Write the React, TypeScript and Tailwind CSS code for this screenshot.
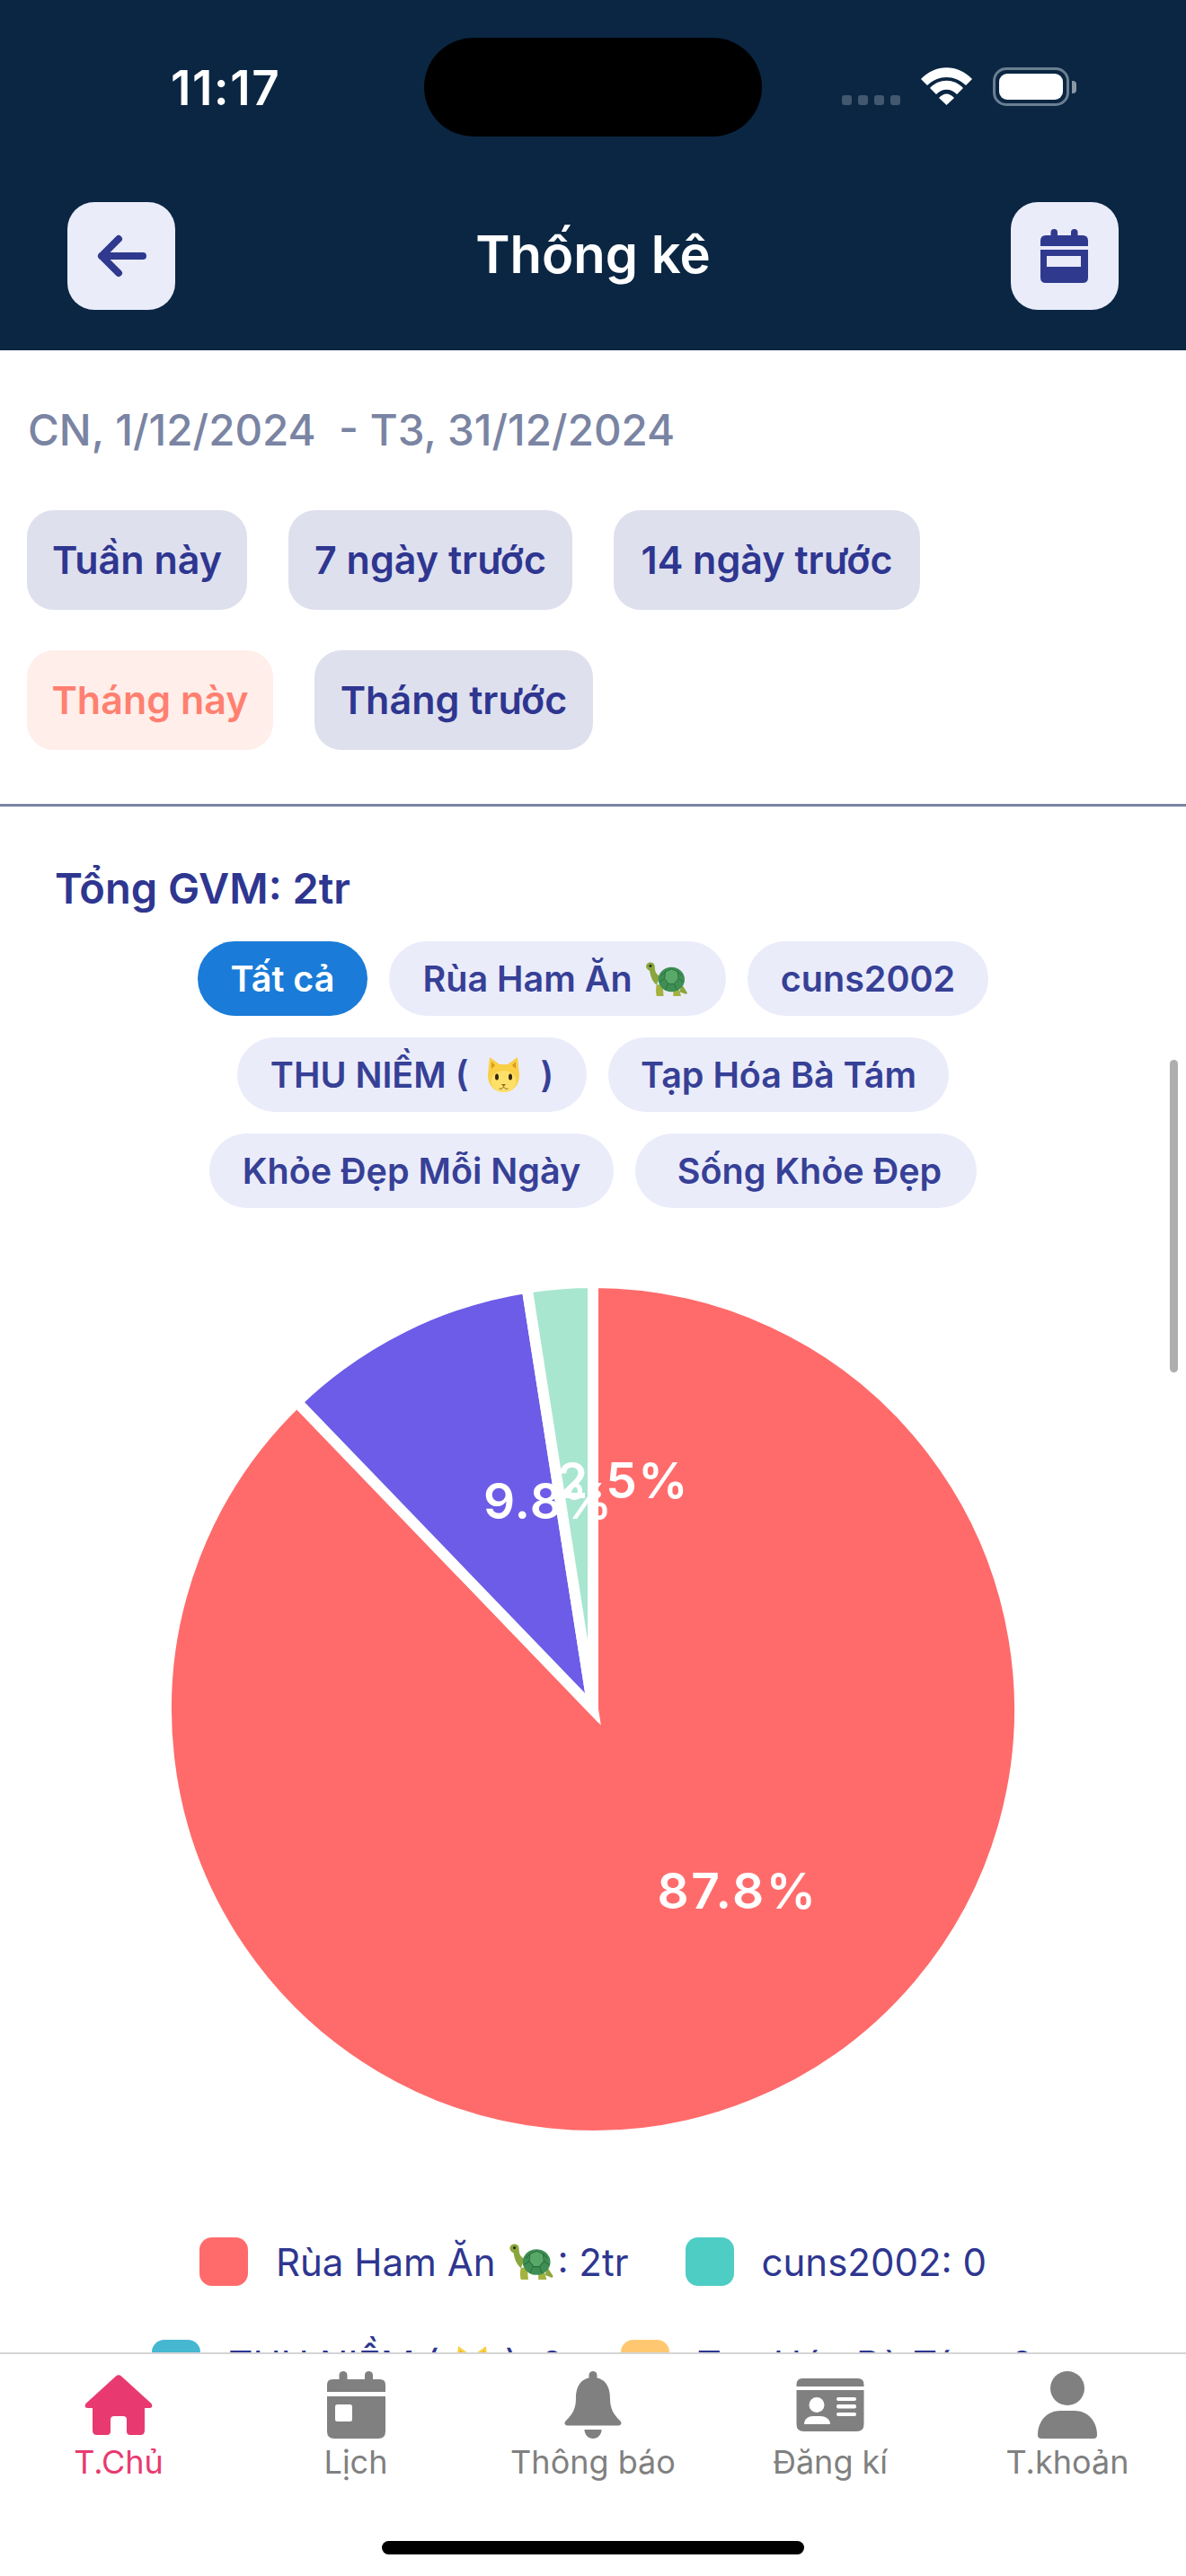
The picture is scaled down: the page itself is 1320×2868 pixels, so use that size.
import React from "react";

const Turtle = ({ w, h }: { w: number; h: number }) => (
  <svg width={w} height={h} viewBox="0 0 48 40" className="inline-block shrink-0">
    <path d="M1 5c0-3 3-5 6-4.500 3 .5 4 3 4 6 0 5 2 8 6 10l-4 10C7 21 6 15 5 10 3 9 1 7 1 5Z" fill="#8aa63c" />
    <path d="M13 26h7l1 13h-8c-1-4-1-9 0-13ZM32 29h6l3 10h-9Z" fill="#a4b23e" />
    <path d="M42 26l6 9-1 2-8-3Z" fill="#8aa63c" />
    <ellipse cx="30" cy="20" rx="15" ry="14" fill="#3f8f54" />
    <path d="M23 11l7-3 7 3 1 8-5 6h-6l-5-6ZM23 11l-5 5M37 11l5 5M38 19l6 4M22 19l-6 4M26 25l-3 7M33 25l3 7" fill="#58a868" stroke="#2c6e3e" strokeWidth="1" />
    <circle cx="6" cy="4.500" r="1.500" fill="#1d2a10" />
  </svg>
);

const Cat = () => (
  <svg width="39" height="43" viewBox="0 0 39 43" className="inline-block shrink-0">
    <path d="M4 1l11 8h9l11-8 2 20c0 12-8 19-17.500 19S2 33 2 21Z" fill="#f9cf45" />
    <path d="M6 6l4 4-4 4ZM33 6l-4 4 4 4Z" fill="#d99a1c" />
    <ellipse cx="19.500" cy="28" rx="14" ry="12" fill="#fde06a" />
    <ellipse cx="12" cy="23" rx="2" ry="3.500" fill="#33260f" />
    <ellipse cx="27" cy="23" rx="2" ry="3.500" fill="#33260f" />
    <path d="M17 31h5l-2.500 3Z" fill="#8a6a2a" />
    <path d="M19.500 34c-1 2-3 3-5 2M19.500 34c1 2 3 3 5 2" stroke="#8a6a2a" strokeWidth="1" fill="none" />
  </svg>
);

const pt = (deg: number, r: number) => {
  const a = (deg * Math.PI) / 180;
  return `${(480 + r * Math.sin(a)).toFixed(2)} ${(480 - r * Math.cos(a)).toFixed(2)}`;
};
const slice = (a: number, b: number, r = 475) =>
  `M480 480 L${pt(a, r)} A${r} ${r} 0 ${b - a > 180 ? 1 : 0} 1 ${pt(b, r)} Z`;

const Pie = () => (
  <svg width="960" height="960" viewBox="0 0 960 960" className="block mx-auto">
    <path d={slice(0, 316.08)} fill="#FF6B6B" stroke="#fff" strokeWidth="12" />
    <path d={slice(316.08, 351.1)} fill="#6C5CE7" stroke="#fff" strokeWidth="12" />
    <path d={slice(351.1, 360)} fill="#A8E6CF" stroke="#fff" strokeWidth="12" />
    <g fill="#fff" fontFamily="Inter, sans-serif" fontWeight="600" fontSize="55" textAnchor="middle">
      <text x="641" y="702" letterSpacing="2.5">87.8%</text>
      <text x="430" y="268" letterSpacing="1">9.8%</text>
      <text x="513.500" y="245" letterSpacing="1.5">2.5%</text>
    </g>
  </svg>
);

const chipBase = "h-[111px] rounded-[30px] flex items-center justify-center text-[43px] font-semibold whitespace-nowrap";

const pillBase = "h-[83px] pt-[2px] rounded-full flex items-center justify-center text-[39.5px] font-semibold whitespace-nowrap";

const Legend = ({ color, children }: { color: string; children: React.ReactNode }) => (
  <div className="flex items-center gap-[31px] h-[54px]">
    <div className="w-[54px] h-[54px] rounded-[14px]" style={{ backgroundColor: color }} />
    <div className="flex items-center text-[42px] text-[#2e3690] whitespace-nowrap">{children}</div>
  </div>
);

const HomeIcon = () => (
  <svg width="76" height="75" viewBox="0 0 76 75" fill="#e83a70">
    <path d="M35 5.500Q38 3 41 5.500L74.500 36Q77 41 72 41L67 41L67 66Q67 71 62 71L51 71Q47 71 47 67L47 54Q47 50 43 50L33 50Q29 50 29 54L29 67Q29 71 25 71L14 71Q9 71 9 66L9 41L4 41Q-1 41 1.500 36Z" />
  </svg>
);

const CalIcon = () => (
  <svg width="76" height="75" viewBox="0 0 76 75" fill="#808080">
    <rect x="19.500" y="0" width="9" height="16" rx="4.500" />
    <rect x="48" y="0" width="9" height="16" rx="4.500" />
    <path d="M12 9H65Q71 9 71 15V23H6V15Q6 9 12 9Z" />
    <path d="M6 28H71V67Q71 75 63 75H14Q6 75 6 67Z" />
    <rect x="15" y="37" width="19" height="19" rx="2.500" fill="#fff" />
  </svg>
);

const BellIcon = () => (
  <svg width="76" height="75" viewBox="0 0 76 75" fill="#808080">
    <rect x="33.500" y="0" width="9" height="14" rx="4.500" />
    <path d="M38 7C24 7 19 18 19 30C19 42 15 48 8 55C5 58 7 60.500 10 60.500H66C69 60.500 71 58 68 55C61 48 57 42 57 30C57 18 52 7 38 7Z" />
    <path d="M28.500 65H47.500C47.500 71 43 75 38 75C33 75 28.500 71 28.500 65Z" />
  </svg>
);

const CardIcon = () => (
  <svg width="76" height="75" viewBox="0 0 76 75" fill="#808080">
    <path d="M7 8H69Q75.500 8 75.500 15V17H0.500V15Q0.500 8 7 8Z" />
    <path d="M0.500 21H75.500V59Q75.500 67 67.500 67H8.500Q0.500 67 0.500 59Z" />
    <g fill="#fff">
      <ellipse cx="23" cy="37.500" rx="8.500" ry="8.500" />
      <path d="M9 59C9 53 14 50 19 50H27C32 50 38 53 38 59Z" />
      <rect x="45" y="29" width="22" height="4" rx="2" />
      <rect x="45" y="37" width="22" height="4.500" rx="2" />
      <rect x="45" y="46" width="22" height="4" rx="2" />
    </g>
  </svg>
);

const UserIcon = () => (
  <svg width="76" height="75" viewBox="0 0 76 75" fill="#808080">
    <ellipse cx="38" cy="19" rx="19" ry="19" />
    <path d="M5 71C5 55 16 44 30 44H46C60 44 71 55 71 71Q71 75 67 75H9Q5 75 5 71Z" />
  </svg>
);

const Tab = ({ icon, label, active }: { icon: React.ReactNode; label: string; active?: boolean }) => (
  <div className="flex flex-col items-center">
    {icon}
    <div
      className={
        active
          ? "mt-[4px] h-[44px] leading-[44px] text-[36px] text-[#e83a70] whitespace-nowrap"
          : "mt-[4px] h-[44px] leading-[44px] text-[36px] text-[#808080] whitespace-nowrap"
      }
    >
      {label}
    </div>
  </div>
);

export default function App() {
  return (
    <div className="relative w-[1320px] h-[2868px] bg-white overflow-hidden flex flex-col font-['Inter',sans-serif]">
      <header className="relative h-[390px] shrink-0 bg-[#0a2642]">
        <div className="h-[225px] flex pt-[70px] pl-[190px] pr-[122px] justify-between">
          <div className="text-white text-[53px] leading-[56px] font-semibold tracking-[1.5px]">11:17</div>
          <div className="flex items-start gap-[23px] pt-[5px]">
            <div className="flex gap-[7px] pt-[31px]">
              <div className="w-[11px] h-[11px] rounded-[3px] bg-[#42586f]" />
              <div className="w-[11px] h-[11px] rounded-[3px] bg-[#42586f]" />
              <div className="w-[11px] h-[11px] rounded-[3px] bg-[#42586f]" />
              <div className="w-[11px] h-[11px] rounded-[3px] bg-[#42586f]" />
            </div>
            <svg width="57" height="42" viewBox="0 0 57 42" fill="#fff">
              <path d="M0 13C16-4 41-4 57 13L50 20C37 8 20 8 7 20Z" />
              <path d="M10 23C20 12 37 12 47 23L40 30C33 23 24 23 17 30Z" />
              <path d="M20 34Q28.500 25 37 34L28.500 42Z" />
            </svg>
            <div className="flex items-center">
              <div className="w-[85px] h-[43px] rounded-[15px] border-[3px] border-[#6b7f92] flex items-center justify-center">
                <div className="w-[71px] h-[29px] rounded-[9px] bg-white" />
              </div>
              <div className="ml-[3px] w-[5px] h-[14px] rounded-r-[4px] bg-[#8a98a6]" />
            </div>
          </div>
        </div>
        <div className="absolute left-[472px] top-[42px] w-[376px] h-[110px] rounded-[55px] bg-black" />
        <div className="flex items-center justify-between px-[75px] h-[120px]">
          <div className="w-[120px] h-[120px] rounded-[30px] bg-[#eaecf9] flex items-center justify-center">
            <svg width="60" height="50" viewBox="0 0 60 50" fill="none" stroke="#2f3a8f" strokeWidth="8" strokeLinecap="round" strokeLinejoin="round">
              <path d="M8 25H54M8 25L27 6M8 25L27 44" />
            </svg>
          </div>
          <div className="text-white text-[58px] font-semibold pb-[3px]">Thống kê</div>
          <div className="w-[120px] h-[120px] rounded-[30px] bg-[#eaecf9] flex items-center justify-center">
            <svg width="53" height="60" viewBox="0 0 53 60" fill="#2f3a8f">
              <rect x="11.500" y="0" width="7.500" height="12" rx="3.700" />
              <rect x="34" y="0" width="7.500" height="12" rx="3.700" />
              <path d="M6 7H47Q53 7 53 13V19H0V13Q0 7 6 7Z" />
              <path fillRule="evenodd" d="M0 23H53V54Q53 60 47 60H6Q0 60 0 54ZM7 30V42H45V30Z" />
            </svg>
          </div>
        </div>
      </header>

      <main className="relative flex-1 min-h-0 overflow-hidden">
        <div className="pt-[61px] pl-[31px] h-[116px] text-[47.5px] leading-[55px] font-medium text-[#7a84a3] whitespace-pre">
          CN, 1/12/2024  - T3, 31/12/2024
        </div>
        <div className="mt-[62px] pl-[30px] flex flex-wrap gap-y-[45px] gap-x-[46px]">
          <div className={`${chipBase} w-[245px] bg-[#dfe0ee] text-[#2e3690]`}>Tuần này</div>
          <div className={`${chipBase} w-[316px] bg-[#dfe0ee] text-[#2e3690]`}>7 ngày trước</div>
          <div className={`${chipBase} w-[341px] bg-[#dfe0ee] text-[#2e3690]`}>14 ngày trước</div>
          <div className={`${chipBase} w-[274px] bg-[#ffeeea] text-[#ff8070]`}>Tháng này</div>
          <div className={`${chipBase} w-[310px] bg-[#dfe0ee] text-[#2e3690]`}>Tháng trước</div>
        </div>
        <div className="mt-[60px] h-[3px] bg-[#7a84a3]" />
        <div className="mt-[62px] pl-[61px] h-[58px] leading-[58px] text-[47px] font-semibold text-[#2e3690]">Tổng GVM: 2tr</div>
        <div className="mt-[30px] px-[127px] flex flex-wrap justify-center gap-[24px]">
          <div className={`${pillBase} w-[189px] bg-[#1a7bd8] text-white`}>Tất cả</div>
          <div className={`${pillBase} w-[375px] bg-[#ebecfa] text-[#364096]`}>
            Rùa Ham Ăn
            <span className="ml-[14px] mr-[6px] flex"><Turtle w={47} h={39} /></span>
          </div>
          <div className={`${pillBase} w-[268px] bg-[#ebecfa] text-[#364096]`}>cuns2002</div>
          <div className={`${pillBase} w-[389px] bg-[#ebecfa] text-[#364096]`}>
            THU NIỀM (
            <span className="ml-[20px] mr-[21px] flex"><Cat /></span>)
          </div>
          <div className={`${pillBase} w-[379px] bg-[#ebecfa] text-[#364096]`}>Tạp Hóa Bà Tám</div>
          <div className={`${pillBase} w-[450px] bg-[#ebecfa] text-[#364096]`}>Khỏe Đẹp Mỗi Ngày</div>
          <div className={`${pillBase} w-[380px] pl-[8px] bg-[#ebecfa] text-[#364096]`}>Sống Khỏe Đẹp</div>
        </div>
        <div className="mt-[78px]">
          <Pie />
        </div>
        <div className="mt-[108px] flex flex-col items-center gap-[60px]">
          <div className="flex gap-[63px]">
            <Legend color="#FF6B6B">
              Rùa Ham Ăn
              <span className="ml-[14px] mr-[3px] flex"><Turtle w={52} h={41} /></span>: 2tr
            </Legend>
            <Legend color="#4ECDC4">cuns2002: 0</Legend>
          </div>
          <div className="flex gap-[63px]">
            <Legend color="#45B7D1">
              THU NIỀM (
              <span className="ml-[17px] mr-[17px] flex"><Cat /></span>): 0
            </Legend>
            <Legend color="#FFC870">Tạp Hóa Bà Tám: 0</Legend>
          </div>
        </div>
        <div className="absolute left-[1302px] top-[790px] w-[9px] h-[348px] rounded-full bg-[#aeaeae]" />
      </main>

      <nav className="h-[249px] shrink-0 bg-white border-t-[2px] border-[#d5d5d5] relative">
        <div className="grid grid-cols-5 pt-[19px]">
          <Tab active icon={<HomeIcon />} label="T.Chủ" />
          <Tab icon={<CalIcon />} label="Lịch" />
          <Tab icon={<BellIcon />} label="Thông báo" />
          <Tab icon={<CardIcon />} label="Đăng kí" />
          <Tab icon={<UserIcon />} label="T.khoản" />
        </div>
        <div className="mt-[66px] mx-auto w-[470px] h-[15px] rounded-full bg-black" />
      </nav>
    </div>
  );
}
